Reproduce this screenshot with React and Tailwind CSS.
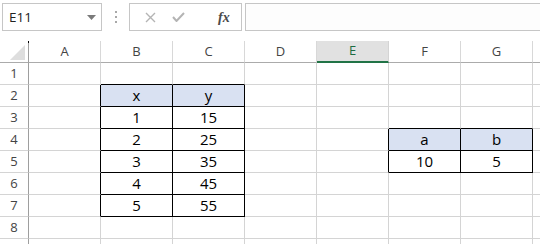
import React from "react"

const cols = ["A", "B", "C", "D", "E", "F", "G"]
const rows = [1, 2, 3, 4, 5, 6, 7, 8, 9]

const values = {
  "2-1": "x", "2-2": "y",
  "3-1": "1", "3-2": "15",
  "4-1": "2", "4-2": "25",
  "5-1": "3", "5-2": "35",
  "6-1": "4", "6-2": "45",
  "7-1": "5", "7-2": "55",
  "4-5": "a", "4-6": "b",
  "5-5": "10", "5-6": "5",
}

const headerCells = ["2-1", "2-2", "4-5", "4-6"]

const tables = [
  { r1: 2, r2: 7, c1: 1, c2: 2 },
  { r1: 4, r2: 5, c1: 5, c2: 6 },
]

function inTable(r, c) {
  return tables.some((t) => r >= t.r1 && r <= t.r2 && c >= t.c1 && c <= t.c2)
}

function FormulaBar() {
  return (
    <div className="flex h-[41px] items-start pt-[3px] pl-[2px] bg-white">
      <div className="flex h-[28px] w-[100px] items-center justify-between border border-[#c6c6c6] bg-white pl-[6px] pr-[5px]">
        <span className="text-[13.5px] text-[#222]" style={{ fontFamily: '"Open Sans", sans-serif' }}>E11</span>
        <svg width="9" height="5" viewBox="0 0 9 5">
          <path d="M0 0 L9 0 L4.5 5 Z" fill="#7a7a7a" />
        </svg>
      </div>
      <div className="flex h-[28px] w-[27px] flex-col items-center justify-center gap-[3px]">
        <span className="h-[2px] w-[2px] bg-[#a8a8a8]" />
        <span className="h-[2px] w-[2px] bg-[#a8a8a8]" />
        <span className="h-[2px] w-[2px] bg-[#a8a8a8]" />
      </div>
      <div className="flex h-[28px] w-[113px] items-center border border-[#c6c6c6] bg-white">
        <svg className="ml-[15px]" width="11" height="11" viewBox="0 0 11 11">
          <path d="M1 1 L10 10 M10 1 L1 10" stroke="#b4b4b4" strokeWidth="1.4" />
        </svg>
        <svg className="ml-[16px]" width="13" height="10" viewBox="0 0 13 10">
          <path d="M1 5 L4.5 9 L12 1" stroke="#b4b4b4" strokeWidth="2" fill="none" />
        </svg>
        <span
          className="ml-[33px] text-[14px] font-semibold italic text-[#4a4a4a]"
          style={{ fontFamily: '"Liberation Serif", serif' }}
        >
          fx
        </span>
      </div>
      <div className="ml-[3px] h-[28px] flex-1 border border-r-0 border-[#c6c6c6] bg-[#fdfdfd]" />
    </div>
  )
}

function ColumnHeaders() {
  return (
    <>
      <div className="relative border-r border-b border-r-[#9e9e9e] border-b-[#ababab] bg-white">
        <span className="absolute right-[-1px] top-0 h-[2px] w-[1px] bg-black" />
        <svg className="absolute left-[10px] top-[4px]" width="15" height="15" viewBox="0 0 15 15">
          <path d="M15 0 L15 15 L0 15 Z" fill="#dedede" />
        </svg>
      </div>
      {cols.map((c) =>
        c === "E" ? (
          <div
            key={c}
            className="flex items-center justify-center border-r border-b-2 border-r-[#d4d4d4] border-b-[#217346] bg-[#e1e1e1] text-[13px] text-[#1d6b42]"
          >
            {c}
          </div>
        ) : (
          <div
            key={c}
            className="flex items-center justify-center border-r border-b border-r-[#d8d8d8] border-b-[#ababab] bg-white text-[13px] text-[#444]"
          >
            {c}
          </div>
        ),
      )}
      <div className="border-b border-b-[#ababab] bg-white" />
    </>
  )
}

function Cell({ r, c }) {
  const key = `${r}-${c}`
  const rightBlack = inTable(r, c) || inTable(r, c + 1)
  const bottomBlack = inTable(r, c) || inTable(r + 1, c)
  const isHeader = headerCells.includes(key)
  return (
    <div
      className={`flex items-center justify-center border-r border-b text-[15px] text-black ${
        rightBlack ? "border-r-black" : "border-r-[#d4d4d4]"
      } ${bottomBlack ? "border-b-black" : "border-b-[#d4d4d4]"} ${isHeader ? "bg-[#d9e1f2]" : "bg-white"}`}
    >
      {values[key]}
    </div>
  )
}

export default function App() {
  return (
    <div
      className="h-[244px] w-[540px] overflow-hidden bg-white"
      style={{ fontFamily: '"Open Sans", "Noto Sans", sans-serif' }}
    >
      <FormulaBar />
      <div className="grid grid-cols-[29px_repeat(7,72px)_1fr] grid-rows-[22px_repeat(9,22px)]">
        <ColumnHeaders />
        {rows.map((r) => (
          <React.Fragment key={r}>
            <div className="flex items-center justify-center border-r border-b border-r-[#9e9e9e] border-b-[#d4d4d4] bg-white text-[13px] text-[#444]">
              {r < 9 ? r : ""}
            </div>
            {cols.map((_, ci) => (
              <Cell key={ci} r={r} c={ci} />
            ))}
            <div className="border-b border-b-[#d4d4d4] bg-white" />
          </React.Fragment>
        ))}
      </div>
    </div>
  )
}
